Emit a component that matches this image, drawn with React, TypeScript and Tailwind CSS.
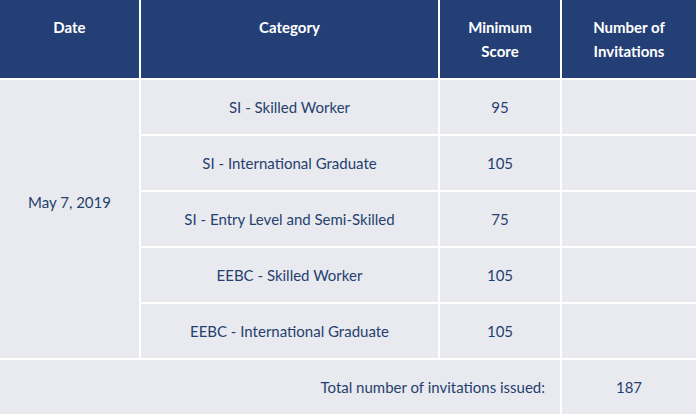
import React from "react";

const rows = [
  { cat: "SI - Skilled Worker", score: "95" },
  { cat: "SI - International Graduate", score: "105" },
  { cat: "SI - Entry Level and Semi-Skilled", score: "75" },
  { cat: "EEBC - Skilled Worker", score: "105" },
  { cat: "EEBC - International Graduate", score: "105" },
];

export default function App() {
  return (
    <div
      className="w-[696px] h-[414px] bg-white overflow-hidden"
      style={{ fontFamily: "Lato, 'Open Sans', sans-serif" }}
    >
      <div className="grid grid-cols-[139px_297px_120px_134px] grid-rows-[78px_repeat(6,54px)] gap-[2px] text-[15px] text-[#253f6e]">
        <div className="bg-[#243f75] text-white font-bold text-center pt-[15px] leading-[24px]">Date</div>
        <div className="bg-[#243f75] text-white font-bold text-center pt-[15px] leading-[24px]">Category</div>
        <div className="bg-[#243f75] text-white font-bold text-center pt-[15px] leading-[24px]">
          Minimum
          <br />
          Score
        </div>
        <div className="bg-[#243f75] text-white font-bold text-center pt-[15px] leading-[24px]">
          Number of
          <br />
          Invitations
        </div>

        <div className="bg-[#e9eaef] row-span-5 flex items-center justify-center pb-[34px]">May 7, 2019</div>
        {rows.map((r, i) => (
          <React.Fragment key={i}>
            <div className="bg-[#e9eaef] flex items-center justify-center">{r.cat}</div>
            <div className="bg-[#e9eaef] flex items-center justify-center">{r.score}</div>
            <div className="bg-[#e9eaef]" />
          </React.Fragment>
        ))}
        <div className="bg-[#e9eaef] col-span-3 flex items-center justify-end pr-[15px]">
          Total number of invitations issued:
        </div>
        <div className="bg-[#e9eaef] flex items-center justify-center">187</div>
      </div>
    </div>
  );
}
